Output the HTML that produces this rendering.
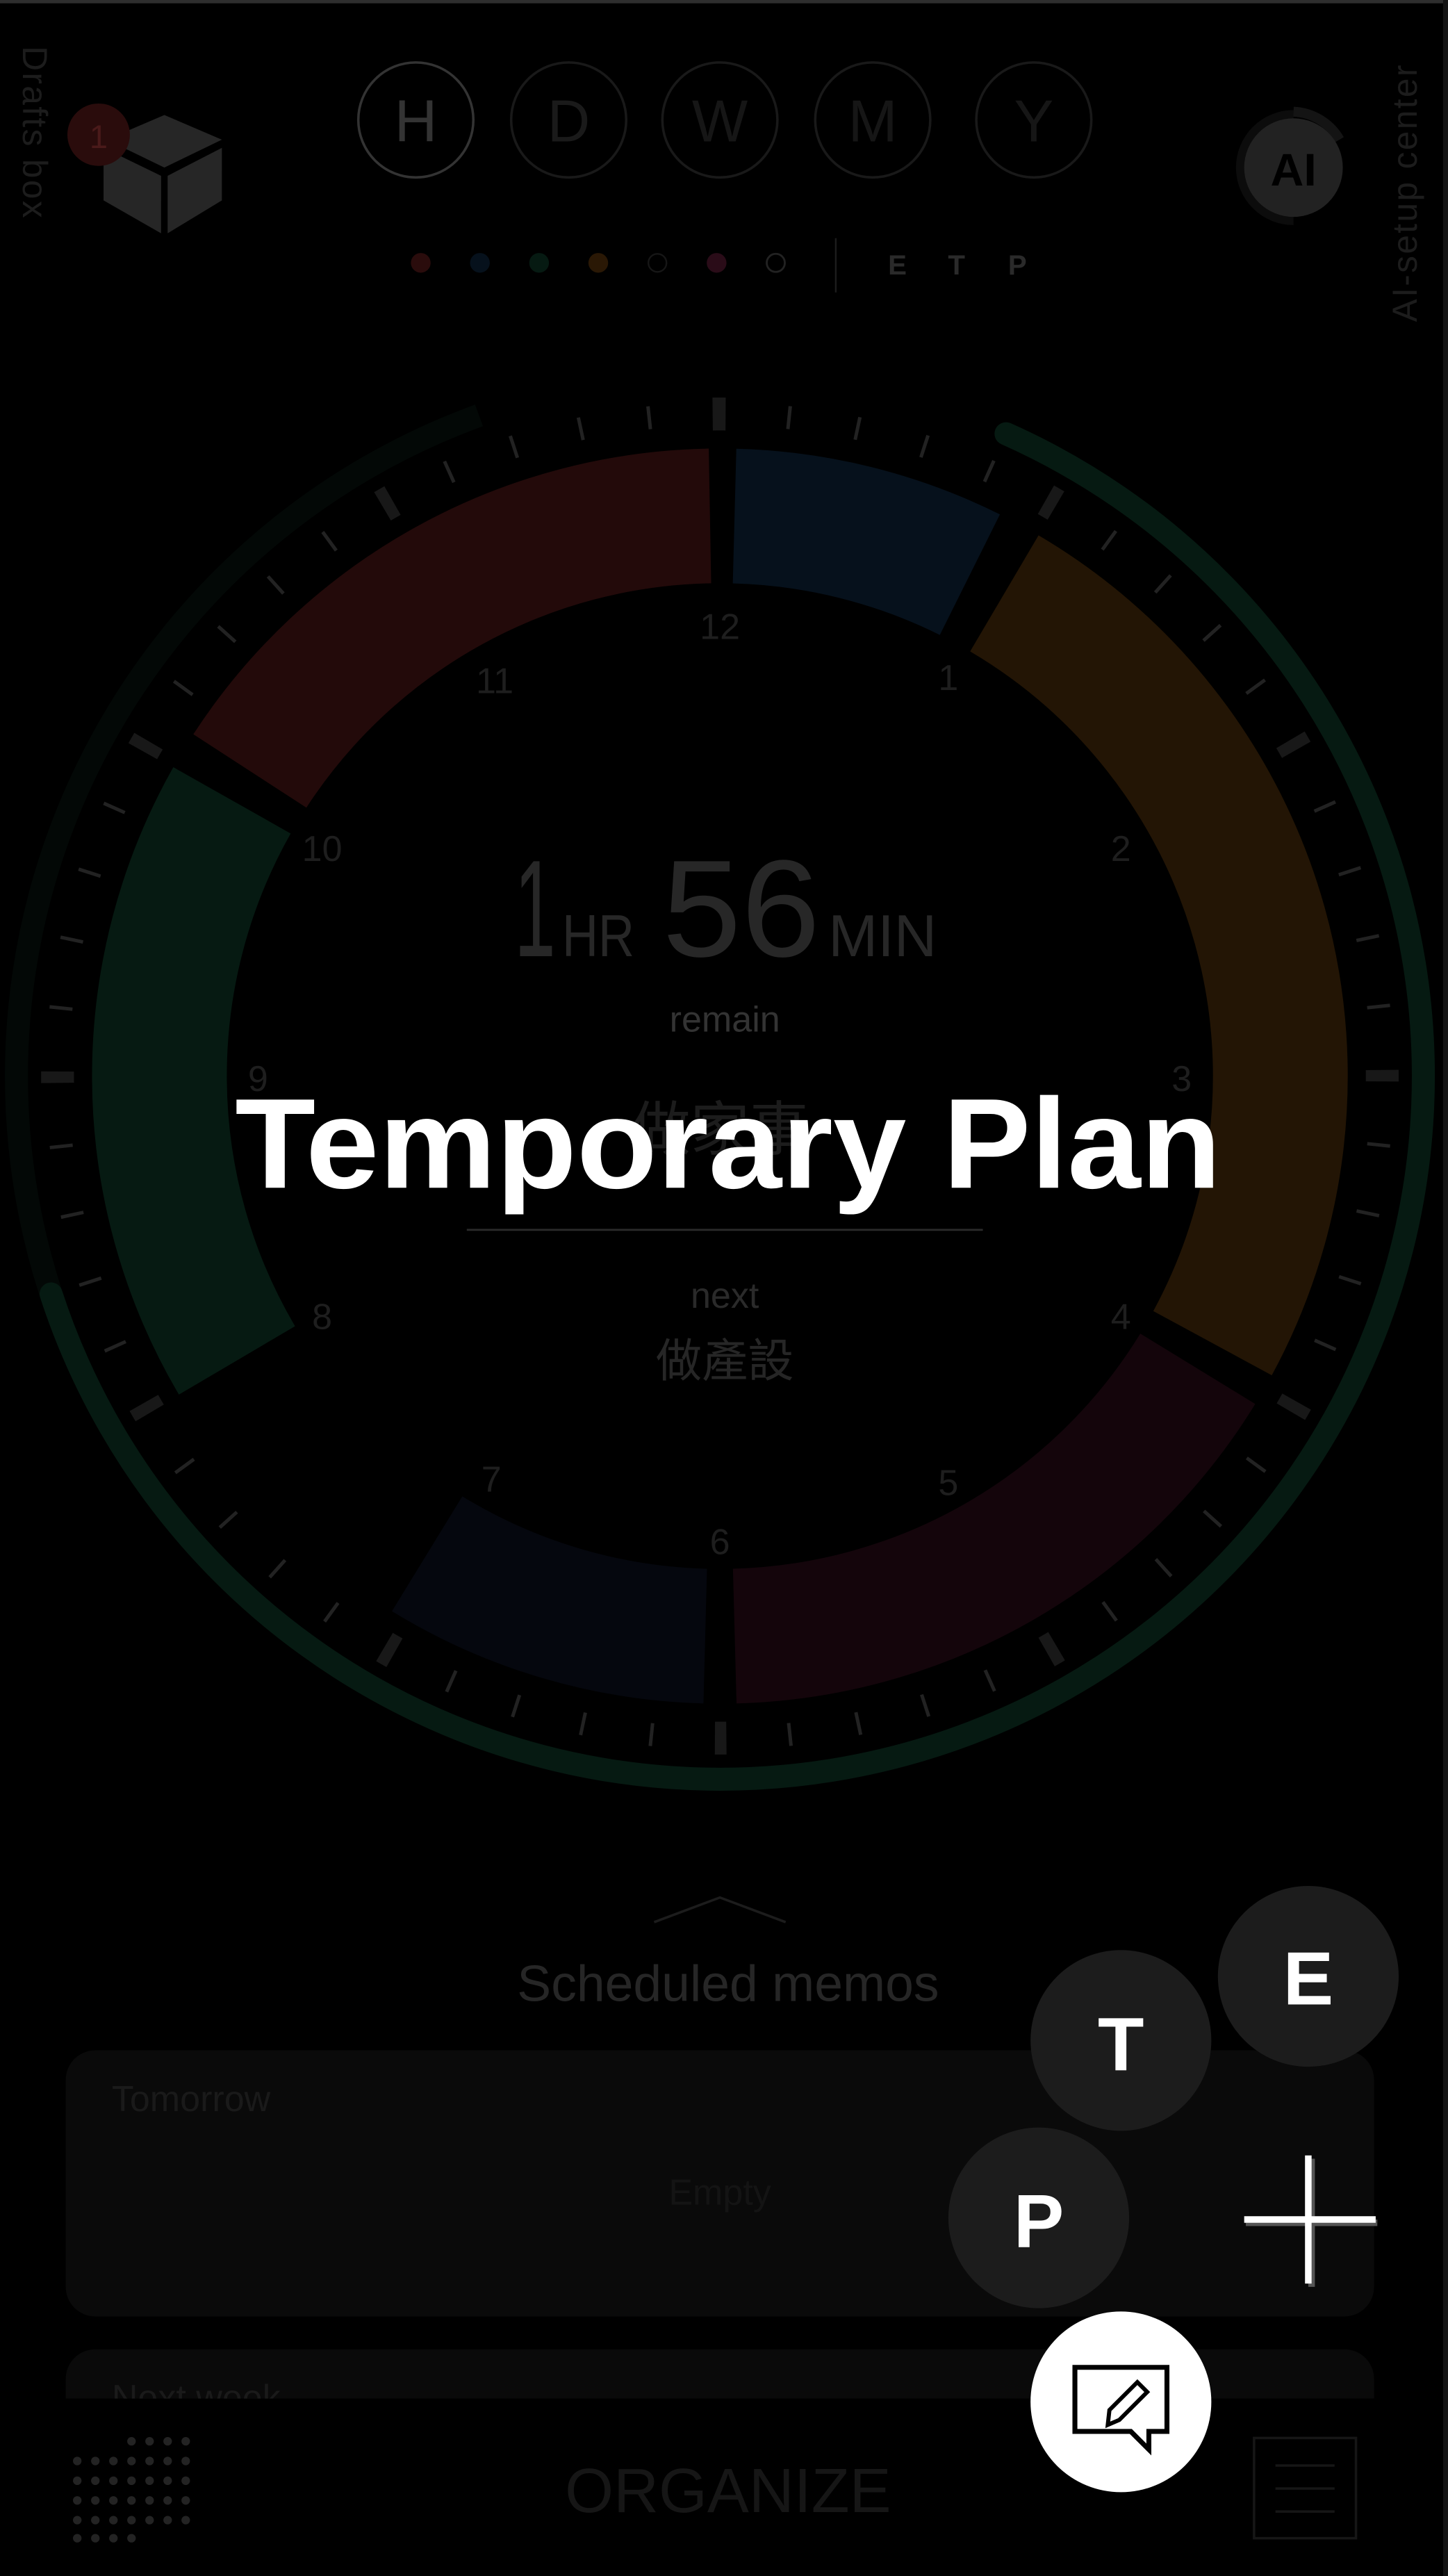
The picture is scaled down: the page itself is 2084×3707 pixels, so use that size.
<!DOCTYPE html>
<html><head><meta charset="utf-8">
<style>
html,body{margin:0;padding:0;background:#000;}
body{width:2084px;height:3707px;overflow:hidden;}
svg{display:block;}
text{font-family:"Liberation Sans","Noto Sans CJK TC",sans-serif;}
</style></head>
<body>
<svg width="2084" height="3707" viewBox="0 0 881 1568" preserveAspectRatio="none" xmlns="http://www.w3.org/2000/svg">
<rect width="881" height="1568" fill="#000"/>
<rect x="0" y="0" width="881" height="2" fill="#2e2e2e"/>
<rect x="878" y="0" width="3" height="1568" fill="#141414"/>

<text transform="translate(14,28) rotate(90)" font-size="21" fill="#1c1c1c" letter-spacing="1">Drafts box</text>
<g fill="#262626">
<polygon points="100,70 135,85 100,102 65,85"/>
<polygon points="63,90 98,107 98,142 63,122"/>
<polygon points="102,107 135,90 135,122 102,142"/>
</g>
<circle cx="60" cy="82" r="19" fill="#2a0c0c"/>
<text x="60" y="90" font-size="20" fill="#4a1a1a" text-anchor="middle">1</text>

<g fill="none" stroke-width="1.5">
<circle cx="253" cy="73" r="35" stroke="#333"/>
<circle cx="346" cy="73" r="35" stroke="#191919"/>
<circle cx="438" cy="73" r="35" stroke="#191919"/>
<circle cx="531" cy="73" r="35" stroke="#191919"/>
<circle cx="629" cy="73" r="35" stroke="#191919"/>
</g>
<g font-size="36" text-anchor="middle" font-weight="300">
<text x="253" y="86" fill="#333">H</text>
<text x="346" y="86" fill="#1a1a1a">D</text>
<text x="438" y="86" fill="#161616">W</text>
<text x="531" y="86" fill="#161616">M</text>
<text x="629" y="86" fill="#161616">Y</text>
</g>
<circle cx="256" cy="160" r="6" fill="#2a0c0c"/>
<circle cx="292" cy="160" r="6" fill="#06111c"/>
<circle cx="328" cy="160" r="6" fill="#061a12"/>
<circle cx="364" cy="160" r="6" fill="#2a1805"/>
<circle cx="400" cy="160" r="5.5" fill="none" stroke="#161616" stroke-width="1"/>
<circle cx="436" cy="160" r="6" fill="#2a0c18"/>
<circle cx="472" cy="160" r="5.5" fill="none" stroke="#222" stroke-width="1.2"/>
<rect x="508" y="145" width="1" height="33" fill="#1c1c1c"/>
<g font-size="17" font-weight="bold" fill="#2a2a2a" text-anchor="middle">
<text x="546" y="167">E</text><text x="582" y="167">T</text><text x="619" y="167">P</text>
</g>

<path d="M787,70 A32,32 0 1,0 787,134" fill="none" stroke="#0c0c0c" stroke-width="6"/>
<path d="M787,68 A34,34 0 0,1 815,85" fill="none" stroke="#141414" stroke-width="6"/>
<circle cx="787" cy="102" r="30" fill="#222"/>
<text x="787" y="113" font-size="28" font-weight="bold" fill="#000" text-anchor="middle">AI</text>
<text transform="translate(862,196) rotate(-90)" font-size="21" fill="#1c1c1c" letter-spacing="1">AI-setup center</text>

<g transform="translate(438,655)">
<circle r="428" fill="none" stroke="#030806" stroke-width="14" pathLength="360" stroke-dasharray="100 360" transform="rotate(150)"/>
<circle r="428" fill="none" stroke="#061a12" stroke-width="14" stroke-linecap="round" pathLength="360" stroke-dasharray="228 360" transform="rotate(-66)"/>
<circle r="403" fill="none" stroke="#222" stroke-width="14" pathLength="360" stroke-dasharray="0.3 5.7" stroke-dashoffset="0.15" transform="rotate(-90)"/>
<circle r="403" fill="none" stroke="#181818" stroke-width="20" pathLength="360" stroke-dasharray="1 29" stroke-dashoffset="0.5" transform="rotate(-90)"/>
<g fill="none" stroke-width="82">
<circle r="341" stroke="#230a0a" pathLength="360" stroke-dasharray="56 360" transform="rotate(-147)"/>
<circle r="341" stroke="#06111c" pathLength="360" stroke-dasharray="25 360" transform="rotate(-88.5)"/>
<circle r="341" stroke="#231505" pathLength="360" stroke-dasharray="88 360" transform="rotate(-59.5)"/>
<circle r="341" stroke="#14050b" pathLength="360" stroke-dasharray="57 360" transform="rotate(31.5)"/>
<circle r="341" stroke="#05070e" pathLength="360" stroke-dasharray="30 360" transform="rotate(91.5)"/>
<circle r="341" stroke="#061a12" pathLength="360" stroke-dasharray="60 360" transform="rotate(149.5)"/>
</g>
</g>
<g font-size="22" fill="#1e1e1e" text-anchor="middle">
<text x="438" y="389">12</text><text x="577" y="420">1</text><text x="682" y="524">2</text>
<text x="719" y="664">3</text><text x="682" y="809">4</text><text x="577" y="910">5</text>
<text x="438" y="946">6</text><text x="299" y="908">7</text><text x="196" y="809">8</text>
<text x="157" y="664">9</text><text x="196" y="524">10</text><text x="301" y="422">11</text>
</g>

<text x="313" y="582" font-size="84" fill="#272727" textLength="25" lengthAdjust="spacingAndGlyphs">1</text>
<text x="342" y="582" font-size="36" fill="#272727" textLength="44" lengthAdjust="spacingAndGlyphs">HR</text>
<text x="403" y="582" font-size="84" fill="#272727" textLength="96" lengthAdjust="spacingAndGlyphs">56</text>
<text x="504" y="582" font-size="36" fill="#272727" textLength="66" lengthAdjust="spacingAndGlyphs">MIN</text>
<text x="441" y="628" font-size="22" fill="#333" text-anchor="middle">remain</text>
<text x="438" y="700" font-size="36" fill="#1c1c1c" text-anchor="middle">做家事</text>
<text x="443" y="723" font-size="78" font-weight="bold" fill="#fff" text-anchor="middle" textLength="600" lengthAdjust="spacingAndGlyphs">Temporary Plan</text>
<rect x="284" y="748" width="314" height="1.2" fill="#2a2a2a"/>
<text x="441" y="796" font-size="22" fill="#2a2a2a" text-anchor="middle">next</text>
<text x="441" y="838" font-size="28" fill="#262626" text-anchor="middle">做產設</text>

<polyline points="398,1170 438,1155 478,1170" fill="none" stroke="#1c1c1c" stroke-width="1.5"/>
<text x="443" y="1218" font-size="31" fill="#262626" text-anchor="middle">Scheduled memos</text>
<rect x="40" y="1248" width="796" height="162" rx="18" fill="#0a0a0a"/>
<text x="68" y="1285" font-size="22" fill="#1a1a1a">Tomorrow</text>
<text x="438" y="1342" font-size="22" fill="#141414" text-anchor="middle">Empty</text>
<rect x="40" y="1430" width="796" height="60" rx="18" fill="#0a0a0a"/>
<text x="68" y="1467" font-size="22" fill="#1a1a1a">Next week</text>
<rect x="0" y="1460" width="878" height="108" fill="#000"/>

<g fill="#232323">
<circle cx="80" cy="1486" r="2.6"/><circle cx="91" cy="1486" r="2.6"/><circle cx="102" cy="1486" r="2.6"/><circle cx="113" cy="1486" r="2.6"/>
<circle cx="47" cy="1498" r="2.6"/><circle cx="58" cy="1498" r="2.6"/><circle cx="69" cy="1498" r="2.6"/><circle cx="80" cy="1498" r="2.6"/><circle cx="91" cy="1498" r="2.6"/><circle cx="102" cy="1498" r="2.6"/><circle cx="113" cy="1498" r="2.6"/>
<circle cx="47" cy="1510" r="2.6"/><circle cx="58" cy="1510" r="2.6"/><circle cx="69" cy="1510" r="2.6"/><circle cx="80" cy="1510" r="2.6"/><circle cx="91" cy="1510" r="2.6"/><circle cx="102" cy="1510" r="2.6"/><circle cx="113" cy="1510" r="2.6"/>
<circle cx="47" cy="1522" r="2.6"/><circle cx="58" cy="1522" r="2.6"/><circle cx="69" cy="1522" r="2.6"/><circle cx="80" cy="1522" r="2.6"/><circle cx="91" cy="1522" r="2.6"/><circle cx="102" cy="1522" r="2.6"/><circle cx="113" cy="1522" r="2.6"/>
<circle cx="47" cy="1534" r="2.6"/><circle cx="58" cy="1534" r="2.6"/><circle cx="69" cy="1534" r="2.6"/><circle cx="80" cy="1534" r="2.6"/><circle cx="91" cy="1534" r="2.6"/><circle cx="102" cy="1534" r="2.6"/><circle cx="113" cy="1534" r="2.6"/>
<circle cx="47" cy="1545" r="2.6"/><circle cx="58" cy="1545" r="2.6"/><circle cx="69" cy="1545" r="2.6"/><circle cx="80" cy="1545" r="2.6"/>
</g>
<text x="443" y="1529" font-size="38" fill="#161616" text-anchor="middle" font-weight="300">ORGANIZE</text>
<rect x="763" y="1484" width="62" height="61" fill="none" stroke="#161616" stroke-width="1.5"/>
<g fill="#161616"><rect x="776" y="1500" width="36" height="1.5"/><rect x="776" y="1514" width="36" height="1.5"/><rect x="776" y="1528" width="36" height="1.5"/></g>

<circle cx="796" cy="1203" r="55" fill="#1c1c1c"/>
<circle cx="682" cy="1242" r="55" fill="#1c1c1c"/>
<circle cx="632" cy="1350" r="55" fill="#1c1c1c"/>
<g font-size="46" font-weight="bold" fill="#fff" text-anchor="middle">
<text x="796" y="1220">E</text><text x="682" y="1260">T</text><text x="632" y="1368">P</text>
</g>
<rect x="758" y="1351" width="80" height="4" fill="#555"/>
<rect x="796" y="1314" width="4" height="78" fill="#555"/>
<rect x="757" y="1349" width="80" height="4" fill="#fff"/>
<rect x="794" y="1312" width="4" height="78" fill="#fff"/>
<circle cx="682" cy="1462" r="55" fill="#fff"/>
<path d="M654,1441 H710 V1480 H699 V1491 L688,1480 H654 Z" fill="none" stroke="#000" stroke-width="3"/>
<path d="M674,1476 L675,1467 L692,1450 L698,1456 L681,1473 Z" fill="none" stroke="#000" stroke-width="2.5"/>
</svg>
</body></html>
